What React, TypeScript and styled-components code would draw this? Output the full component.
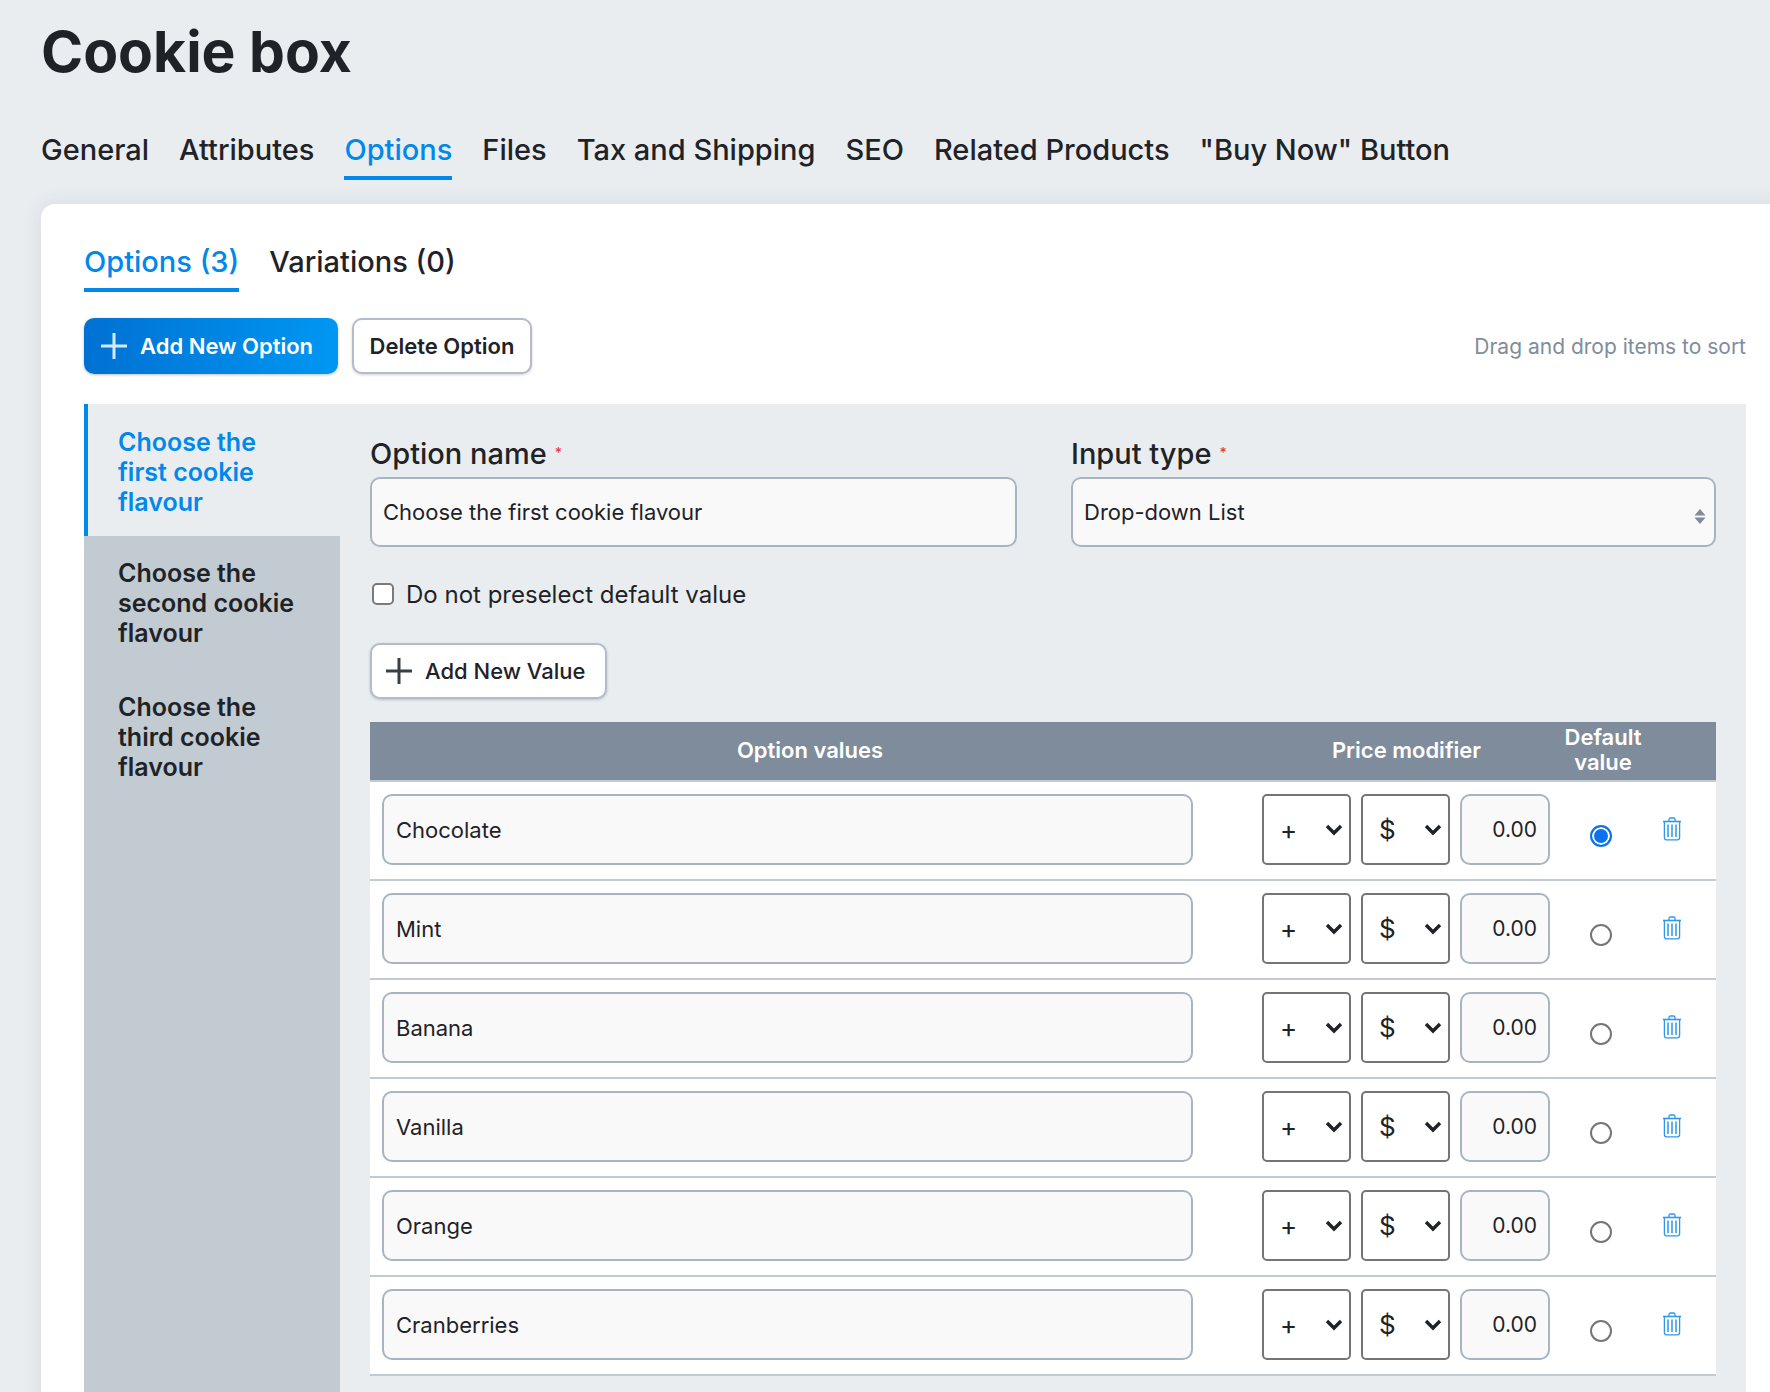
import styled, { createGlobalStyle } from "styled-components";

const GlobalStyle = createGlobalStyle`
html, body {
  margin: 0;
  padding: 0;
  background-color: #e9edf0;
  overflow: hidden;
}
* {
  box-sizing: border-box;
}
`;

const Page = styled.div`
width: 1770px;
height: 1392px;
overflow: hidden;
padding-left: 41px;
color: #1f2327;
font-family: Inter, "Liberation Sans", sans-serif;
`;

const Title = styled.h1`
margin: 0;
height: 104px;
font-size: 57px;
line-height: 104px;
font-weight: 700;
`;

const TabBar = styled.div<{ $gap: number }>`
display: flex;
gap: ${(p) => p.$gap}px;
`;

const Tab = styled.div<{ $active?: boolean; $size: number }>`
height: 50px;
margin-top: 0;
font-size: ${(p) => p.$size}px;
line-height: 40px;
font-weight: 500;
white-space: nowrap;
color: ${(p) => (p.$active ? "#0088ea" : "#1f2327")};
border-bottom: 4px solid ${(p) => (p.$active ? "#0088ea" : "transparent")};
`;

const MainNav = styled(TabBar)`
margin-top: 26px;
`;

const Card = styled.div`
margin-top: 24px;
margin-right: -20px;
padding: 38px 44px 0 43px;
background-color: white;
border-radius: 14px 0 0 0;
box-shadow: 0 0 20px rgba(60, 70, 90, 0.1);
`;

const Toolbar = styled.div`
display: flex;
align-items: flex-start;
gap: 14px;
margin-top: 26px;
`;

const PrimaryButton = styled.button`
display: flex;
align-items: center;
gap: 12px;
width: 254px;
height: 56px;
padding: 0 0 0 16px;
border: none;
border-radius: 10px;
background: linear-gradient(90deg, #0071d3, #0097f2);
box-shadow: 0 1px 3px rgba(0, 0, 0, 0.25);
color: white;
font-family: inherit;
font-size: 22px;
font-weight: 600;
white-space: nowrap;
`;

const OutlineButton = styled.button<{ $width: number }>`
display: flex;
align-items: center;
justify-content: center;
gap: 12px;
width: ${(p) => p.$width}px;
height: 56px;
padding: 0;
border: 2px solid #b3bdc9;
border-radius: 10px;
background-color: white;
box-shadow: 0 1px 3px rgba(0, 0, 0, 0.18);
color: #1f2327;
font-family: inherit;
font-size: 22px;
font-weight: 600;
white-space: nowrap;
`;

const Hint = styled.div`
margin-left: auto;
margin-top: 16px;
font-size: 21px;
line-height: 26px;
color: #7f8c9b;
`;

const Panel = styled.div`
display: flex;
margin-top: 30px;
background-color: #e9edf0;
`;

const Sidebar = styled.div`
flex: none;
width: 256px;
background-color: #c2cad2;
`;

const SideItem = styled.div<{ $active?: boolean }>`
padding: ${(p) => (p.$active ? "23px 30px 19px 30px" : "22px 30px 22px 34px")};
font-size: 25px;
line-height: 30px;
font-weight: 600;
color: ${(p) => (p.$active ? "#0088ea" : "#1f2327")};
background-color: ${(p) => (p.$active ? "#e9edf0" : "transparent")};
border-left: ${(p) => (p.$active ? "4px solid #0088ea" : "none")};
`;

const Main = styled.div`
flex: 1;
padding: 32px 30px 40px 30px;
`;

const FieldGrid = styled.div`
display: grid;
grid-template-columns: 647px 645px;
column-gap: 54px;
`;

const Label = styled.div`
height: 34px;
margin-bottom: 7px;
font-size: 29px;
line-height: 34px;
font-weight: 500;
`;

const Star = styled.span`
margin-left: 8px;
color: #f03a3a;
font-size: 14px;
vertical-align: 6px;
`;

const TextInput = styled.input`
display: block;
width: 100%;
height: 70px;
padding: 0 11px;
border: 2px solid #a9b4c2;
border-radius: 10px;
background-color: #f9f9f9;
color: #1f2327;
font-family: inherit;
font-size: 22px;
outline: none;
`;

const SelectWrap = styled.div`
position: relative;
`;

const TypeSelect = styled.select`
display: block;
width: 100%;
height: 70px;
padding: 0 11px;
border: 2px solid #a9b4c2;
border-radius: 10px;
background-color: #f9f9f9;
color: #1f2327;
font-family: inherit;
font-size: 22px;
appearance: none;
outline: none;
`;

const UpDown = styled.svg`
position: absolute;
right: 10px;
top: 32px;
`;

const CheckRow = styled.label`
display: flex;
align-items: center;
gap: 12px;
height: 34px;
margin-top: 30px;
padding-left: 2px;
font-size: 24px;
`;

const CheckBox = styled.input`
width: 22px;
height: 22px;
margin: 0;
appearance: none;
border: 2px solid #7a7a7a;
border-radius: 5px;
background-color: white;
`;

const AddValue = styled(OutlineButton)`
margin-top: 32px;
justify-content: flex-start;
padding-left: 13px;
font-weight: 500;
`;

const Table = styled.div`
margin-top: 23px;
background-color: white;
`;

const TableHead = styled.div`
display: grid;
grid-template-columns: 880px 313px 80px 1fr;
align-items: center;
height: 60px;
padding-bottom: 2px;
background-color: #7f8c9b;
border-bottom: 2px solid #c2cad2;
color: white;
font-size: 22px;
line-height: 25px;
font-weight: 600;
text-align: center;
`;

const Row = styled.div`
display: flex;
align-items: flex-start;
height: 99px;
padding: 12px 0 0 12px;
border-bottom: 2px solid #c2cad2;
`;

const NameInput = styled(TextInput)`
flex: none;
width: 811px;
height: 71px;
padding: 0 12px;
margin-right: 69px;
`;

const SmallSelectWrap = styled(SelectWrap)`
flex: none;
width: 89px;
height: 71px;
margin-right: 10px;
`;

const SmallSelect = styled.select`
display: block;
width: 100%;
height: 100%;
padding: 0 0 0 16px;
border: 2px solid #757575;
border-radius: 5px;
background-color: white;
color: #1f2327;
font-family: inherit;
font-size: 26px;
appearance: none;
outline: none;
`;

const Chevron = styled.svg`
position: absolute;
right: 8px;
top: 30px;
`;

const NumberInput = styled(TextInput)`
flex: none;
width: 90px;
height: 71px;
padding: 0 11px;
text-align: right;
font-size: 21px;
`;

const Radio = styled.span<{ $checked?: boolean }>`
flex: none;
width: 22px;
height: 22px;
margin: 31px 0 0 40px;
border-radius: 50%;
background-color: ${(p) => (p.$checked ? "#0b72ee" : "white")};
border: 2px solid ${(p) => (p.$checked ? "#0b72ee" : "#767676")};
box-shadow: ${(p) => (p.$checked ? "inset 0 0 0 2px white" : "none")};
`;

const TrashButton = styled.span`
flex: none;
margin: 23px 0 0 50px;
line-height: 0;
color: #2f97ec;
`;

const PlusIcon = ({ color }: { color: string }) => (
    <svg width="28" height="28" viewBox="0 0 28 28" fill="none">
        <path d="M14 1v26M1 14h26" stroke={color} strokeWidth="3" />
    </svg>
);

const TrashIcon = () => (
    <svg width="20" height="24" viewBox="0 0 20 24" fill="none" stroke="currentColor" strokeWidth="1.3">
        <path d="M1 4.5h18" strokeWidth="1.6" />
        <path d="M7 4V2.4C7 1.6 7.6 1 8.4 1h3.2c.8 0 1.4.6 1.4 1.4V4" />
        <path d="M2.4 5v15.6c0 1.3.9 2.2 2.2 2.2h10.8c1.3 0 2.2-.9 2.2-2.2V5" />
        <path d="M6 7.5v12.5M10 7.5v12.5M14 7.5v12.5" strokeWidth="1.5" />
    </svg>
);

const SmallChoice = ({ value }: { value: string }) => (
    <SmallSelectWrap>
        <SmallSelect defaultValue={value}>
            <option>{value}</option>
        </SmallSelect>
        <Chevron width="18" height="12" viewBox="0 0 18 12" fill="none">
            <path d="M2 2l7 7 7-7" stroke="#1f2327" strokeWidth="3.4" />
        </Chevron>
    </SmallSelectWrap>
);

const values = ["Chocolate", "Mint", "Banana", "Vanilla", "Orange", "Cranberries"];

function App() {
    return (
        <Page>
            <GlobalStyle />
            <Title>Cookie box</Title>
            <MainNav $gap={30}>
                <Tab $size={29}>General</Tab>
                <Tab $size={29}>Attributes</Tab>
                <Tab $size={29} $active>Options</Tab>
                <Tab $size={29}>Files</Tab>
                <Tab $size={29}>Tax and Shipping</Tab>
                <Tab $size={29}>SEO</Tab>
                <Tab $size={29}>Related Products</Tab>
                <Tab $size={29}>"Buy Now" Button</Tab>
            </MainNav>
            <Card>
                <TabBar $gap={30}>
                    <Tab $size={29} $active>Options (3)</Tab>
                    <Tab $size={29}>Variations (0)</Tab>
                </TabBar>
                <Toolbar>
                    <PrimaryButton>
                        <PlusIcon color="#d4ebfb" />
                        Add New Option
                    </PrimaryButton>
                    <OutlineButton $width={180}>Delete Option</OutlineButton>
                    <Hint>Drag and drop items to sort</Hint>
                </Toolbar>
                <Panel>
                    <Sidebar>
                        <SideItem $active>Choose the<br />first cookie<br />flavour</SideItem>
                        <SideItem>Choose the<br />second cookie<br />flavour</SideItem>
                        <SideItem>Choose the<br />third cookie<br />flavour</SideItem>
                    </Sidebar>
                    <Main>
                        <FieldGrid>
                            <div>
                                <Label>Option name<Star>*</Star></Label>
                                <TextInput readOnly value="Choose the first cookie flavour" />
                            </div>
                            <div>
                                <Label>Input type<Star>*</Star></Label>
                                <SelectWrap>
                                    <TypeSelect defaultValue="Drop-down List">
                                        <option>Drop-down List</option>
                                    </TypeSelect>
                                    <UpDown width="12" height="15" viewBox="0 0 12 15" fill="#7f8c9b">
                                        <path d="M6 0l5.5 6.4H.5zM6 15L.5 8.6h11z" />
                                    </UpDown>
                                </SelectWrap>
                            </div>
                        </FieldGrid>
                        <CheckRow>
                            <CheckBox type="checkbox" />
                            Do not preselect default value
                        </CheckRow>
                        <AddValue $width={237}>
                            <PlusIcon color="#3a3f45" />
                            Add New Value
                        </AddValue>
                        <Table>
                            <TableHead>
                                <div>Option values</div>
                                <div>Price modifier</div>
                                <div>Default<br />value</div>
                            </TableHead>
                            {values.map((value, i) => (
                                <Row key={value}>
                                    <NameInput readOnly value={value} />
                                    <SmallChoice value="+" />
                                    <SmallChoice value="$" />
                                    <NumberInput readOnly value="0.00" />
                                    <Radio $checked={i === 0} />
                                    <TrashButton><TrashIcon /></TrashButton>
                                </Row>
                            ))}
                        </Table>
                    </Main>
                </Panel>
            </Card>
        </Page>
    );
}

export default App;
